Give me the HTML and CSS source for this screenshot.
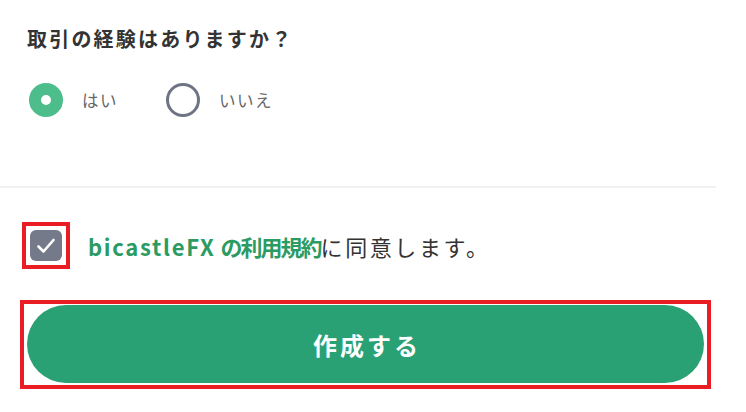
FILE: index.html
```html
<!DOCTYPE html>
<html lang="ja">
<head>
<meta charset="utf-8">
<link rel="stylesheet" href="styles.css">
</head>
<body>
<main class="page">
  <section class="question">
    <h2 class="question-title">取引の経験はありますか？</h2>
    <div class="radio-group">
      <label class="radio">
        <span class="radio-dot radio-dot--on"></span>
        <span class="radio-label">はい</span>
      </label>
      <label class="radio">
        <span class="radio-dot"></span>
        <span class="radio-label">いいえ</span>
      </label>
    </div>
  </section>
  <hr class="divider">
  <div class="agree">
    <span class="mark mark--check">
      <span class="checkbox">
        <svg viewBox="0 0 32 31" width="32" height="31" aria-hidden="true">
          <path d="M8.5 16.5 L13.5 21.5 L23.5 10" fill="none" stroke="#ffffff" stroke-width="2.6" stroke-linecap="round" stroke-linejoin="round"/>
        </svg>
      </span>
    </span>
    <p class="agree-text"><span class="agree-link"><span class="agree-latin">bicastleFX</span> <span class="agree-terms">の利用規約</span></span><span class="agree-rest">に同意します。</span></p>
  </div>
  <div class="mark mark--button">
    <button class="submit" type="button">作成する</button>
  </div>
</main>
</body>
</html>
```

FILE: styles.css
```css
* { box-sizing: border-box; }

html, body {
  margin: 0;
  padding: 0;
  background: #ffffff;
}

body {
  font-family: "Noto Sans CJK JP", "Noto Sans", sans-serif;
  color: #333333;
}

.page {
  width: 746px;
  height: 412px;
  overflow: hidden;
  padding-top: 27px;
}

.question {
  padding-left: 27px;
}

.question-title {
  margin: 0;
  font-size: 20px;
  line-height: 24px;
  font-weight: 700;
  letter-spacing: 2.2px;
  color: #333333;
}

.radio-group {
  display: flex;
  align-items: center;
  margin-top: 32px;
  height: 34px;
}

.radio {
  display: flex;
  align-items: center;
}

.radio + .radio {
  margin-left: 46px;
}

.radio-dot {
  width: 34px;
  height: 34px;
  border-radius: 50%;
  border: 3px solid #6f7484;
  background: #ffffff;
  margin-left: 2px;
}

.radio-dot--on {
  border: 12.5px solid #4dbd8b;
}

.radio-label {
  margin-left: 19px;
  font-size: 16.5px;
  letter-spacing: 1.5px;
  color: #666666;
}

.divider {
  margin: 69px 0 0 0;
  width: 716px;
  height: 2px;
  border: 0;
  background: #f1f1f1;
}

.agree {
  display: flex;
  align-items: center;
  margin-top: 34px;
  padding-left: 22px;
}

.mark {
  border: 4px solid #ea1c24;
}

.mark--check {
  display: block;
  width: 48px;
  height: 47px;
  padding: 4px;
}

.checkbox {
  display: block;
  width: 32px;
  height: 31px;
  border-radius: 6px;
  background: #747a89;
}

.checkbox svg {
  display: block;
}

.agree-text {
  margin: 0 0 0 18px;
  font-size: 22px;
  line-height: 28px;
}

.agree-link {
  color: #2b9b63;
  font-weight: 700;
}

.agree-latin {
  letter-spacing: 1.7px;
}

.agree-terms {
  letter-spacing: -2px;
}

.agree-rest {
  color: #333333;
  letter-spacing: 2.6px;
}

.mark--button {
  margin: 31px 0 0 20px;
  width: 691px;
  height: 89px;
  padding: 1px 3px 2px 3px;
}

.submit {
  display: block;
  width: 100%;
  height: 78px;
  border: 0;
  border-radius: 39px;
  background: #2aa174;
  color: #ffffff;
  font-family: "Noto Sans CJK JP", "Noto Sans", sans-serif;
  font-size: 24px;
  font-weight: 700;
  letter-spacing: 3px;
  padding: 0 0 0 3px;
}
```
